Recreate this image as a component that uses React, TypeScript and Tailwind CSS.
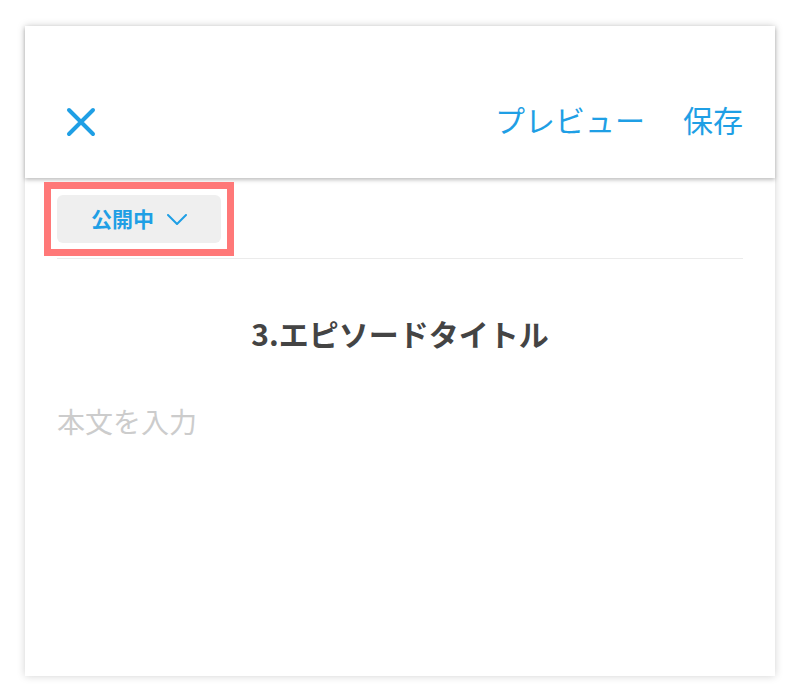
import React from "react";

const font = { fontFamily: '"Noto Sans CJK JP", "Noto Sans", sans-serif' };

export default function App() {
  return (
    <div className="min-h-[700px] bg-white pt-[26px] px-[25px]" style={font}>
      <div className="h-[650px] bg-white shadow-[0_0_8px_rgba(0,0,0,0.18)] flex flex-col">
        {/* header bar */}
        <div className="h-[152px] shrink-0 bg-white shadow-[0_2px_4px_rgba(0,0,0,0.25)] pt-[78px] pl-[41px] pr-[32px]">
          <div className="h-[36px] flex items-center justify-between">
            <svg width="30" height="30" viewBox="0 0 30 30" aria-label="閉じる">
              <path d="M3 3 L27 27 M27 3 L3 27" stroke="#1f9fe5" strokeWidth="4" strokeLinecap="round" fill="none" />
            </svg>
            <div className="-mt-[6px] flex items-center gap-[38px] text-[30px] leading-none text-[#1f9fe5]">
              <span>プレビュー</span>
              <span>保存</span>
            </div>
          </div>
        </div>

        {/* editor body */}
        <div className="px-[32px] flex flex-col">
          <div className="mt-[4px] -ml-[13px] w-fit border-[7px] border-[#ff7878] p-[6px]">
            <button className="h-[48px] w-[164px] rounded-[6px] bg-[#efefef] flex items-center justify-center gap-[13px] text-[21px] font-bold text-[#1f9fe5]">
              <span>公開中</span>
              <svg width="20" height="11" viewBox="0 0 20 11">
                <path d="M1 1 L10 10 L19 1" stroke="#1f9fe5" strokeWidth="2" fill="none" strokeLinecap="round" strokeLinejoin="round" />
              </svg>
            </button>
          </div>
          <div className="mt-[2px] h-px bg-[#ebebeb]" />
          <h1 className="mt-[54px] text-center text-[30px] leading-[40px] font-bold text-[#444444]">
            3.エピソードタイトル
          </h1>
          <p className="mt-[48px] text-[28px] leading-[40px] text-[#cccccc]">本文を入力</p>
        </div>
      </div>
    </div>
  );
}
